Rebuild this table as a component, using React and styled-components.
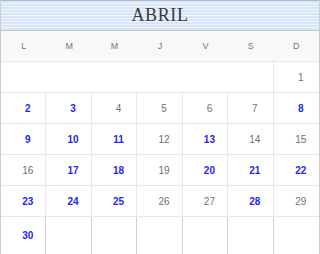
import React from "react";
import styled, {createGlobalStyle} from "styled-components";

const GlobalStyle = createGlobalStyle`
  html, body {
    margin: 0;
    padding: 0;
    background: #ffffff;
  }
`

const Calendar = styled.div`
  width: 320px;
  height: 254px;
  box-sizing: border-box;
  border-left: 1px solid #cccccc;
  border-right: 1px solid #cccccc;
  overflow: hidden;
  font-family: "Liberation Sans", Arial, sans-serif;
`

const Title = styled.div`
  height: 31px;
  box-sizing: border-box;
  border-top: 1px solid #b8b8b8;
  border-bottom: 1px solid #c4c4c4;
  background: repeating-linear-gradient(
    to bottom,
    #d6e6fb 0px,
    #d6e6fb 2px,
    #f0f5fd 2px,
    #f0f5fd 3px
  );
  display: flex;
  align-items: center;
  justify-content: center;
  font-family: "Liberation Serif", "Times New Roman", serif;
  font-size: 18px;
  letter-spacing: 0.6px;
  color: #3a3a3a;
`

const Grid = styled.div`
  display: grid;
  grid-template-columns: repeat(7, 1fr);
  grid-auto-rows: 31px;
`

const Head = styled.div`
  background: #f8f8f8;
  border-bottom: 1px solid #e8e8e8;
  display: flex;
  align-items: center;
  justify-content: center;
  font-size: 9px;
  color: #777777;
`

const Cell = styled.div`
  box-sizing: border-box;
  border-bottom: 1px solid #e8e8e8;
  border-right: ${p => p.$last ? "none" : "1px solid #e8e8e8"};
  grid-column: ${p => p.$span ? `span ${p.$span}` : "auto"};
  height: ${p => p.$tall ? "37px" : "31px"};
  display: flex;
  align-items: center;
  justify-content: center;
  padding-left: 9px;
  font-size: 10px;
  font-weight: ${p => p.$bold ? "bold" : "normal"};
  color: ${p => p.$bold ? "#2525f2" : "#707070"};
`

const LastCell = styled(Cell)`
  border-bottom: none;
  border-right: ${p => p.$last ? "none" : "1px solid #d0d0d0"};
`

const DAYS = ["L", "M", "M", "J", "V", "S", "D"];
const BLUE = [2, 3, 8, 9, 10, 11, 13, 17, 18, 20, 21, 22, 23, 24, 25, 28, 30];

function App() {
    const weeks = [];
    for (let start = 2; start <= 23; start += 7) {
        weeks.push([0, 1, 2, 3, 4, 5, 6].map(i => start + i));
    }

    return (
        <Calendar>
            <GlobalStyle/>
            <Title>ABRIL</Title>
            <Grid>
                {DAYS.map((d, i) => <Head key={i}>{d}</Head>)}
                <Cell $span={6}/>
                <Cell $last>1</Cell>
                {weeks.map(week => week.map((n, i) => (
                    <Cell key={n} $last={i === 6} $bold={BLUE.includes(n)}>{n}</Cell>
                )))}
                <LastCell $tall $bold>30</LastCell>
                {[1, 2, 3, 4, 5, 6].map(i => <LastCell key={i} $tall $last={i === 6}/>)}
            </Grid>
        </Calendar>
    );
}

export default App;
